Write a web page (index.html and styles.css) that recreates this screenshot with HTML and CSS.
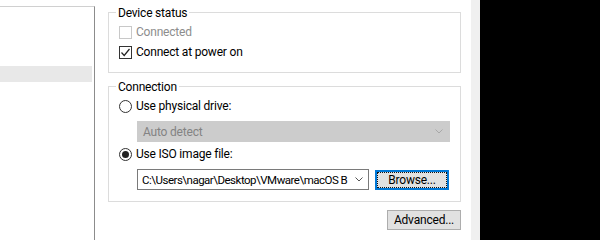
FILE: index.html
```html
<!DOCTYPE html>
<html lang="en">
<head>
  <meta charset="UTF-8" />
  <title>CD/DVD settings</title>
  <link rel="stylesheet" href="styles.css">
</head>
<body>

<div class="dialog">
  <!-- device list (cut off on the left) -->
  <div class="device-list">
    <div class="list-item selected"></div>
  </div>

  <div class="settings">
    <div class="group">
      <div class="group-title">Device status</div>
      <label class="option disabled">
        <span class="check"></span>
        Connected
      </label>
      <label class="option">
        <span class="check">
          <svg width="11" height="11" viewBox="0 0 11 11"><polyline points="1.5,5.5 4.2,8.5 9.5,2" fill="none" stroke="#222" stroke-width="1.2" /></svg>
        </span>
        Connect at power on
      </label>
    </div>

    <div class="group connection">
      <div class="group-title">Connection</div>
      <label class="option">
        <span class="radio"></span>
        Use physical drive:
      </label>
      <div class="combo disabled">
        <span class="combo-text">Auto detect</span>
        <svg class="chevron" width="8" height="5" viewBox="0 0 8 5"><polyline points="0.5,0.5 4,4 7.5,0.5" fill="none" stroke="#a8a8a8" stroke-width="1" /></svg>
      </div>
      <label class="option">
        <span class="radio on"><span class="dot"></span></span>
        Use ISO image file:
      </label>
      <div class="iso-row">
        <div class="combo path">
          <span class="combo-text">C:\Users\nagar\Desktop\VMware\macOS B</span>
          <svg class="chevron" width="8" height="5" viewBox="0 0 8 5"><polyline points="0.5,0.5 4,4 7.5,0.5" fill="none" stroke="#555" stroke-width="1" /></svg>
        </div>
        <button class="btn focused">Browse...</button>
      </div>
    </div>

    <div class="actions">
      <button class="btn">Advanced...</button>
    </div>
  </div>

  <div class="edge"></div>
</div>

<div class="outside"></div>

</body>
</html>
```

FILE: styles.css
```css
* {
  box-sizing: border-box;
}

body {
  margin: 0;
  width: 600px;
  height: 240px;
  overflow: hidden;
  display: flex;
  background: #000;
  font-family: Roboto, "Noto Sans", sans-serif;
  font-size: 12px;
  letter-spacing: -0.2px;
  color: #000;
}

.dialog {
  width: 480px;
  height: 240px;
  display: flex;
  background: #fff;
}

.outside {
  flex: 1;
  background: #000;
}

.device-list {
  width: 95px;
  margin-top: 6px;
  border-top: 1px solid #d0d0d0;
  border-right: 1px solid #8c8c8c;
  padding-top: 59px;
}

.list-item {
  height: 16px;
  margin-right: 2px;
}

.list-item.selected {
  background: #e8e8e8;
}

.settings {
  flex: 1;
  padding: 12px 10px 0 13px;
}

.edge {
  width: 9px;
  background: #f0f0f0;
}

.group {
  border: 1px solid #dcdcdc;
  padding: 0 10px 10px 10px;
}

.group.connection {
  margin-top: 13px;
  padding-bottom: 11px;
}

.group-title {
  width: max-content;
  margin: -8px 0 0 -3px;
  padding: 0 2px;
  height: 16px;
  line-height: 16px;
  background: #fff;
}

.option {
  display: flex;
  align-items: center;
  gap: 4px;
  height: 20px;
  line-height: 20px;
}

.group-title + .option {
  margin-top: 1px;
}

.option.disabled {
  color: #8d8d8d;
}

.check {
  width: 13px;
  height: 13px;
  border: 1px solid #333;
  display: flex;
  align-items: center;
  justify-content: center;
}

.option.disabled .check {
  border-color: #c8c8c8;
}

.radio {
  width: 13px;
  height: 13px;
  border: 1px solid #333;
  border-radius: 50%;
  display: flex;
  align-items: center;
  justify-content: center;
}

.radio .dot {
  width: 7px;
  height: 7px;
  border-radius: 50%;
  background: #222;
}

.combo {
  display: flex;
  align-items: center;
  justify-content: space-between;
  height: 21px;
  padding: 0 6px 0 5px;
  margin-left: 18px;
}

.combo.disabled {
  margin-top: 5px;
  margin-bottom: 2px;
  background: #cccccc;
  border: 1px solid #cccccc;
  color: #838383;
}

.iso-row {
  display: flex;
  gap: 6px;
  margin: 5px 0 0 18px;
}

.combo.path {
  margin-left: 0;
  width: 232px;
  height: 21px;
  border: 1px solid #7a7a7a;
  padding: 0 5px 0 4px;
}

.combo-text {
  white-space: nowrap;
}

.path .combo-text {
  font-size: 11.5px;
  letter-spacing: -0.5px;
}

.btn {
  font-family: inherit;
  font-size: 12px;
  letter-spacing: inherit;
  height: 20px;
  padding: 0;
  background: #e1e1e1;
  border: 1px solid #adadad;
  color: #000;
}

.btn.focused {
  width: 74px;
  margin-top: 1px;
  border-color: #0078d7;
  box-shadow: inset 0 0 0 1px #0078d7;
  outline: 1px dotted #111;
  outline-offset: -3px;
}

.actions {
  display: flex;
  justify-content: flex-end;
  margin-top: 8px;
}

.actions .btn {
  width: 74px;
}
```
